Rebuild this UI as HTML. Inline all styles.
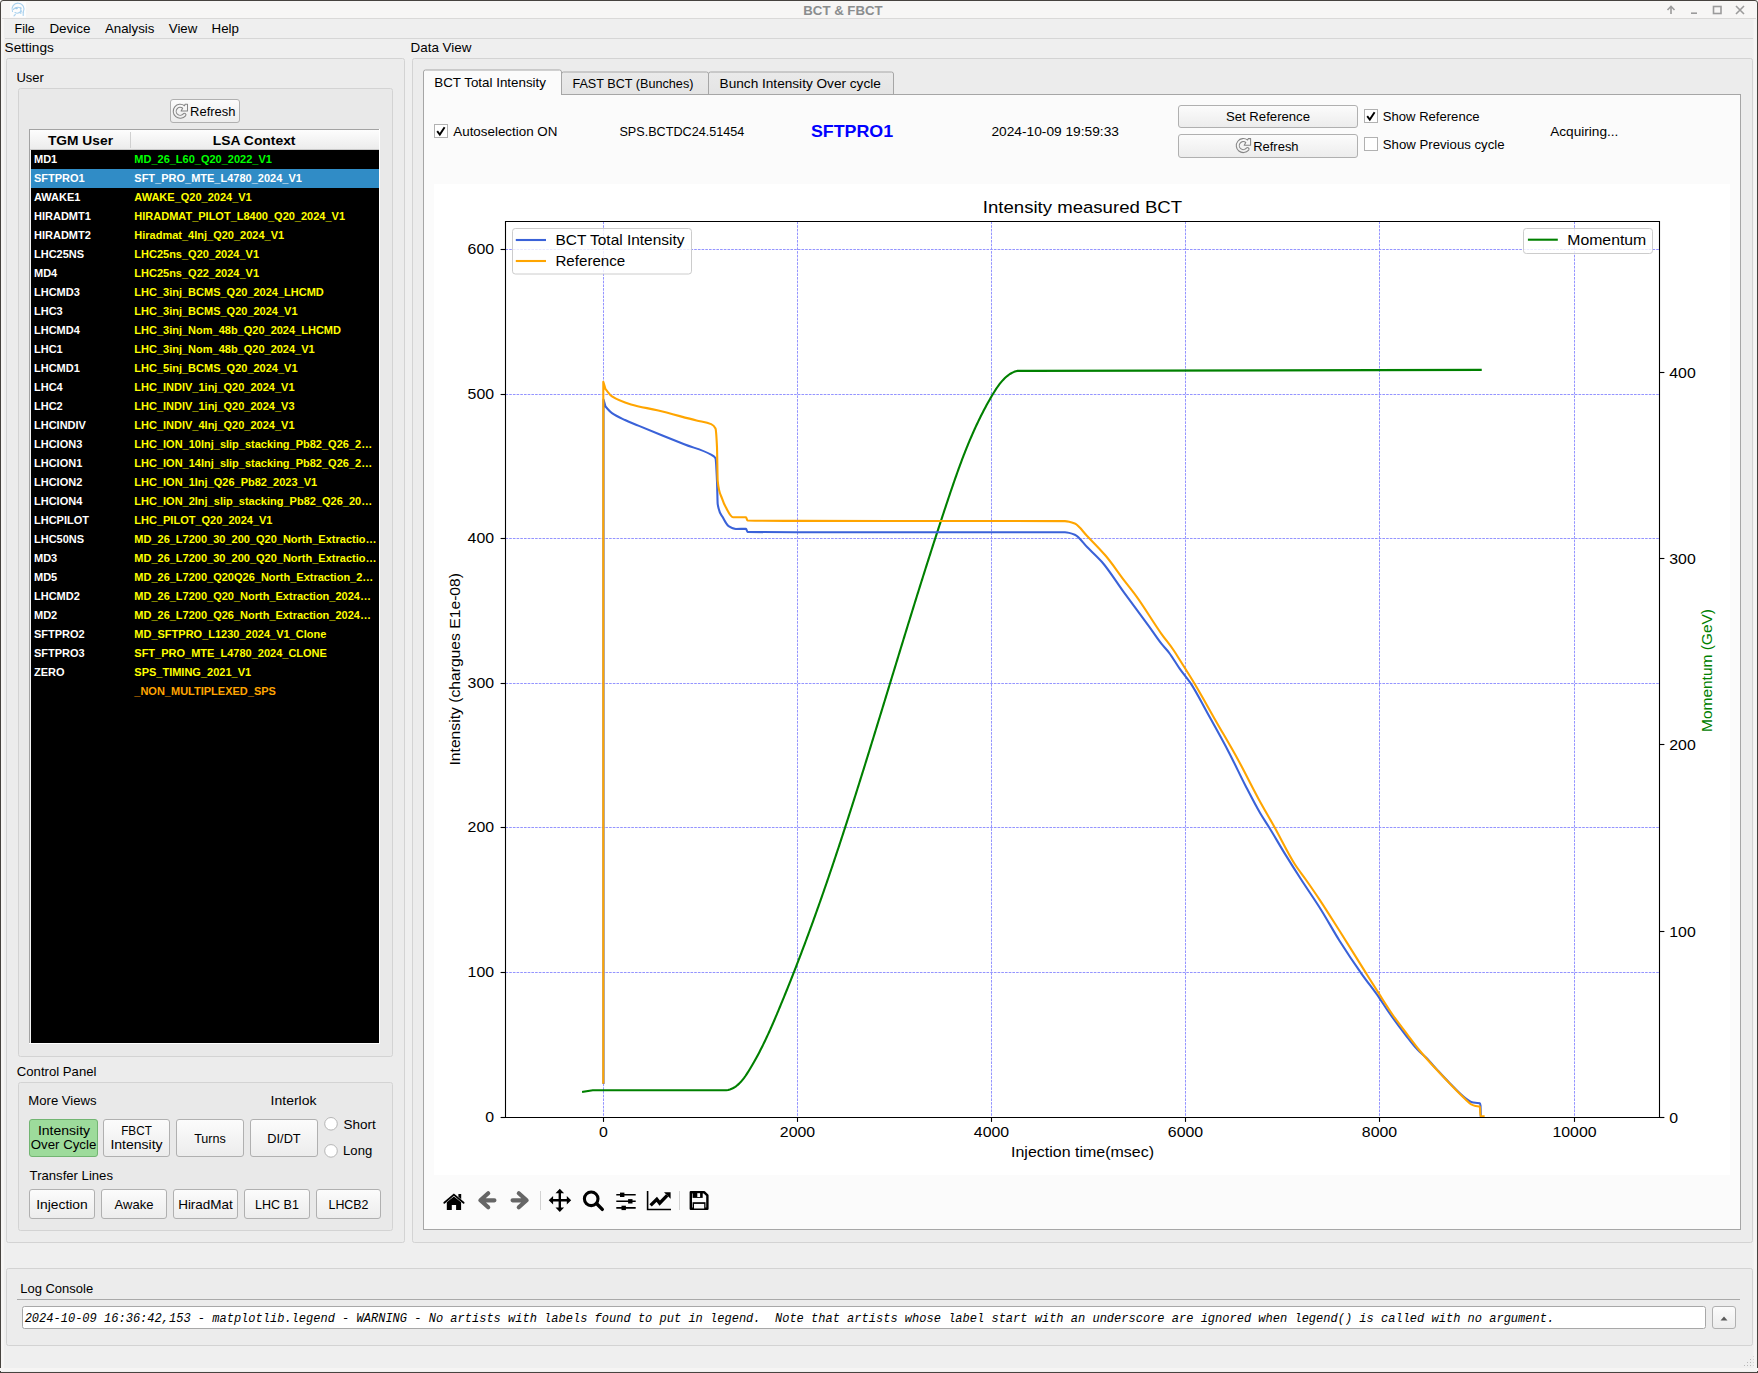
<!DOCTYPE html>
<html><head><meta charset="utf-8"><title>BCT &amp; FBCT</title>
<style>
html,body{margin:0;padding:0;width:1758px;height:1373px;overflow:hidden;background:#efefef;}
svg{display:block;}
text{white-space:pre;}
</style></head><body>
<svg width="1758" height="1373" viewBox="0 0 1758 1373" shape-rendering="auto">
<defs>
<linearGradient id="btn" x1="0" y1="0" x2="0" y2="1"><stop offset="0" stop-color="#fcfcfc"/><stop offset="1" stop-color="#ececec"/></linearGradient>
<linearGradient id="hdr" x1="0" y1="0" x2="0" y2="1"><stop offset="0" stop-color="#fdfdfd"/><stop offset="1" stop-color="#ebebeb"/></linearGradient>
<linearGradient id="tabu" x1="0" y1="0" x2="0" y2="1"><stop offset="0" stop-color="#eaeaea"/><stop offset="1" stop-color="#e4e4e4"/></linearGradient>
</defs>
<rect x="0" y="0" width="1758" height="1373" fill="#efefef"/>
<rect x="0" y="0" width="1758" height="19" fill="#f7f6f5"/>
<line x1="2" y1="18.5" x2="1756" y2="18.5" stroke="#dad9d8" stroke-width="1"/>
<text x="803.30" y="14.80" font-family='"Liberation Sans",sans-serif' font-size="12.36" fill="#8a8d8e" font-weight="bold" textLength="79.30" lengthAdjust="spacingAndGlyphs">BCT &amp; FBCT</text>
<rect x="10" y="2" width="16" height="15.5" fill="#ffffff" opacity="0.75"/>
<g fill="none" stroke="#a9d1ee" stroke-width="1.1" stroke-linecap="round"><path d="M12.5 11.5 A6 6 0 1 1 23.2 12.2"/><path d="M13.2 9.5 Q17 5.5 21 8.5"/><path d="M15 12.5 Q18 14.5 21.5 11"/><path d="M20.8 7.2 V13.5 M23.2 12 V15.5 M15.3 14.5 L14 15.8"/></g>
<ellipse cx="16.5" cy="8.3" rx="1.4" ry="0.9" fill="#9ecae9"/>
<g fill="none" stroke="#9b9b9b" stroke-width="1.6"><path d="M1671 14 V6.5 M1667.5 10 L1671 6.3 L1674.5 10"/><path d="M1691 13.2 H1697"/><rect x="1713.5" y="6.5" width="7.5" height="7"/><path d="M1736 6 L1744 14 M1744 6 L1736 14"/></g>
<text x="14.52" y="33.00" font-family='"Liberation Sans",sans-serif' font-size="12.36" fill="#000" textLength="20.08" lengthAdjust="spacingAndGlyphs">File</text>
<text x="49.42" y="33.00" font-family='"Liberation Sans",sans-serif' font-size="12.36" fill="#000" textLength="41.05" lengthAdjust="spacingAndGlyphs">Device</text>
<text x="105.01" y="33.00" font-family='"Liberation Sans",sans-serif' font-size="12.36" fill="#000" textLength="49.44" lengthAdjust="spacingAndGlyphs">Analysis</text>
<text x="168.81" y="33.00" font-family='"Liberation Sans",sans-serif' font-size="12.36" fill="#000" textLength="28.47" lengthAdjust="spacingAndGlyphs">View</text>
<text x="211.52" y="33.00" font-family='"Liberation Sans",sans-serif' font-size="12.36" fill="#000" textLength="27.38" lengthAdjust="spacingAndGlyphs">Help</text>
<line x1="5" y1="38.5" x2="1753" y2="38.5" stroke="#d6d6d6" stroke-width="1"/>
<text x="4.61" y="51.90" font-family='"Liberation Sans",sans-serif' font-size="12.36" fill="#000" textLength="49.23" lengthAdjust="spacingAndGlyphs">Settings</text>
<text x="410.52" y="52.00" font-family='"Liberation Sans",sans-serif' font-size="12.36" fill="#000" textLength="60.94" lengthAdjust="spacingAndGlyphs">Data View</text>
<rect x="6.5" y="58.5" width="398" height="1184" rx="2" fill="#ececec" stroke="#d3d3d3" stroke-width="1"/>
<rect x="412.5" y="58.5" width="1340" height="1184" rx="2" fill="#ececec" stroke="#d3d3d3" stroke-width="1"/>
<text x="16.46" y="81.70" font-family='"Liberation Sans",sans-serif' font-size="12.36" fill="#000" textLength="27.36" lengthAdjust="spacingAndGlyphs">User</text>
<rect x="18.5" y="88.5" width="374" height="968" rx="2" fill="#e9e9e9" stroke="#d3d3d3" stroke-width="1"/>
<text x="16.83" y="1076.10" font-family='"Liberation Sans",sans-serif' font-size="12.36" fill="#000" textLength="79.58" lengthAdjust="spacingAndGlyphs">Control Panel</text>
<rect x="18.5" y="1082.5" width="374" height="148" rx="2" fill="#e9e9e9" stroke="#d3d3d3" stroke-width="1"/>
<rect x="170.5" y="99.5" width="69" height="23" rx="2.5" fill="url(#btn)" stroke="#b0b0b0" stroke-width="1"/>
<path d="M184.51 105.78 A7.0 7.0 0 1 0 185.56 115.80 A1.5 1.5 0 0 0 183.26 113.87 A4.0 4.0 0 1 1 182.66 108.15 L181.10 111.00 L187.50 111.00 L187.50 104.30 L185.10 104.30 Z" fill="none" stroke="#858585" stroke-width="1.05" stroke-linejoin="round"/>
<text x="190.12" y="115.90" font-family='"Liberation Sans",sans-serif' font-size="12.36" fill="#000" textLength="45.34" lengthAdjust="spacingAndGlyphs">Refresh</text>
<rect x="29" y="129" width="351" height="915" fill="#000000"/>
<line x1="29.5" y1="129" x2="29.5" y2="1044" stroke="#a3a3a3" stroke-width="1"/>
<line x1="29" y1="129.5" x2="380" y2="129.5" stroke="#a3a3a3" stroke-width="1"/>
<line x1="379.5" y1="129" x2="379.5" y2="1044" stroke="#ffffff" stroke-width="1"/>
<line x1="29" y1="1043.5" x2="380" y2="1043.5" stroke="#ffffff" stroke-width="1"/>
<line x1="30.5" y1="130" x2="30.5" y2="1043" stroke="#f4f4f4" stroke-width="1"/>
<rect x="30" y="130" width="349" height="20" fill="url(#hdr)"/>
<line x1="30" y1="149.5" x2="379" y2="149.5" stroke="#c9c9c9" stroke-width="1"/>
<line x1="130.5" y1="132" x2="130.5" y2="148" stroke="#d0d0d0" stroke-width="1"/>
<text x="47.94" y="144.70" font-family='"Liberation Sans",sans-serif' font-size="12.36" fill="#000" font-weight="bold" textLength="65.09" lengthAdjust="spacingAndGlyphs">TGM User</text>
<text x="212.80" y="144.70" font-family='"Liberation Sans",sans-serif' font-size="12.36" fill="#000" font-weight="bold" textLength="82.69" lengthAdjust="spacingAndGlyphs">LSA Context</text>
<rect x="31" y="169" width="348" height="19" fill="#308cc6"/>
<text x="34.0" y="162.7" font-family='"Liberation Sans",sans-serif' font-size="11" font-weight="bold" fill="#ffffff">MD1</text>
<text x="134.3" y="162.7" font-family='"Liberation Sans",sans-serif' font-size="11" font-weight="bold" fill="#00ff00">MD_26_L60_Q20_2022_V1</text>
<text x="34.0" y="181.7" font-family='"Liberation Sans",sans-serif' font-size="11" font-weight="bold" fill="#ffffff">SFTPRO1</text>
<text x="134.3" y="181.7" font-family='"Liberation Sans",sans-serif' font-size="11" font-weight="bold" fill="#ffffff">SFT_PRO_MTE_L4780_2024_V1</text>
<text x="34.0" y="200.7" font-family='"Liberation Sans",sans-serif' font-size="11" font-weight="bold" fill="#ffffff">AWAKE1</text>
<text x="134.3" y="200.7" font-family='"Liberation Sans",sans-serif' font-size="11" font-weight="bold" fill="#ffff00">AWAKE_Q20_2024_V1</text>
<text x="34.0" y="219.7" font-family='"Liberation Sans",sans-serif' font-size="11" font-weight="bold" fill="#ffffff">HIRADMT1</text>
<text x="134.3" y="219.7" font-family='"Liberation Sans",sans-serif' font-size="11" font-weight="bold" fill="#ffff00">HIRADMAT_PILOT_L8400_Q20_2024_V1</text>
<text x="34.0" y="238.7" font-family='"Liberation Sans",sans-serif' font-size="11" font-weight="bold" fill="#ffffff">HIRADMT2</text>
<text x="134.3" y="238.7" font-family='"Liberation Sans",sans-serif' font-size="11" font-weight="bold" fill="#ffff00">Hiradmat_4Inj_Q20_2024_V1</text>
<text x="34.0" y="257.7" font-family='"Liberation Sans",sans-serif' font-size="11" font-weight="bold" fill="#ffffff">LHC25NS</text>
<text x="134.3" y="257.7" font-family='"Liberation Sans",sans-serif' font-size="11" font-weight="bold" fill="#ffff00">LHC25ns_Q20_2024_V1</text>
<text x="34.0" y="276.7" font-family='"Liberation Sans",sans-serif' font-size="11" font-weight="bold" fill="#ffffff">MD4</text>
<text x="134.3" y="276.7" font-family='"Liberation Sans",sans-serif' font-size="11" font-weight="bold" fill="#ffff00">LHC25ns_Q22_2024_V1</text>
<text x="34.0" y="295.7" font-family='"Liberation Sans",sans-serif' font-size="11" font-weight="bold" fill="#ffffff">LHCMD3</text>
<text x="134.3" y="295.7" font-family='"Liberation Sans",sans-serif' font-size="11" font-weight="bold" fill="#ffff00">LHC_3inj_BCMS_Q20_2024_LHCMD</text>
<text x="34.0" y="314.7" font-family='"Liberation Sans",sans-serif' font-size="11" font-weight="bold" fill="#ffffff">LHC3</text>
<text x="134.3" y="314.7" font-family='"Liberation Sans",sans-serif' font-size="11" font-weight="bold" fill="#ffff00">LHC_3inj_BCMS_Q20_2024_V1</text>
<text x="34.0" y="333.7" font-family='"Liberation Sans",sans-serif' font-size="11" font-weight="bold" fill="#ffffff">LHCMD4</text>
<text x="134.3" y="333.7" font-family='"Liberation Sans",sans-serif' font-size="11" font-weight="bold" fill="#ffff00">LHC_3inj_Nom_48b_Q20_2024_LHCMD</text>
<text x="34.0" y="352.7" font-family='"Liberation Sans",sans-serif' font-size="11" font-weight="bold" fill="#ffffff">LHC1</text>
<text x="134.3" y="352.7" font-family='"Liberation Sans",sans-serif' font-size="11" font-weight="bold" fill="#ffff00">LHC_3inj_Nom_48b_Q20_2024_V1</text>
<text x="34.0" y="371.7" font-family='"Liberation Sans",sans-serif' font-size="11" font-weight="bold" fill="#ffffff">LHCMD1</text>
<text x="134.3" y="371.7" font-family='"Liberation Sans",sans-serif' font-size="11" font-weight="bold" fill="#ffff00">LHC_5inj_BCMS_Q20_2024_V1</text>
<text x="34.0" y="390.7" font-family='"Liberation Sans",sans-serif' font-size="11" font-weight="bold" fill="#ffffff">LHC4</text>
<text x="134.3" y="390.7" font-family='"Liberation Sans",sans-serif' font-size="11" font-weight="bold" fill="#ffff00">LHC_INDIV_1inj_Q20_2024_V1</text>
<text x="34.0" y="409.7" font-family='"Liberation Sans",sans-serif' font-size="11" font-weight="bold" fill="#ffffff">LHC2</text>
<text x="134.3" y="409.7" font-family='"Liberation Sans",sans-serif' font-size="11" font-weight="bold" fill="#ffff00">LHC_INDIV_1inj_Q20_2024_V3</text>
<text x="34.0" y="428.7" font-family='"Liberation Sans",sans-serif' font-size="11" font-weight="bold" fill="#ffffff">LHCINDIV</text>
<text x="134.3" y="428.7" font-family='"Liberation Sans",sans-serif' font-size="11" font-weight="bold" fill="#ffff00">LHC_INDIV_4Inj_Q20_2024_V1</text>
<text x="34.0" y="447.7" font-family='"Liberation Sans",sans-serif' font-size="11" font-weight="bold" fill="#ffffff">LHCION3</text>
<text x="134.3" y="447.7" font-family='"Liberation Sans",sans-serif' font-size="11" font-weight="bold" fill="#ffff00">LHC_ION_10Inj_slip_stacking_Pb82_Q26_2…</text>
<text x="34.0" y="466.7" font-family='"Liberation Sans",sans-serif' font-size="11" font-weight="bold" fill="#ffffff">LHCION1</text>
<text x="134.3" y="466.7" font-family='"Liberation Sans",sans-serif' font-size="11" font-weight="bold" fill="#ffff00">LHC_ION_14Inj_slip_stacking_Pb82_Q26_2…</text>
<text x="34.0" y="485.7" font-family='"Liberation Sans",sans-serif' font-size="11" font-weight="bold" fill="#ffffff">LHCION2</text>
<text x="134.3" y="485.7" font-family='"Liberation Sans",sans-serif' font-size="11" font-weight="bold" fill="#ffff00">LHC_ION_1Inj_Q26_Pb82_2023_V1</text>
<text x="34.0" y="504.7" font-family='"Liberation Sans",sans-serif' font-size="11" font-weight="bold" fill="#ffffff">LHCION4</text>
<text x="134.3" y="504.7" font-family='"Liberation Sans",sans-serif' font-size="11" font-weight="bold" fill="#ffff00">LHC_ION_2Inj_slip_stacking_Pb82_Q26_20…</text>
<text x="34.0" y="523.7" font-family='"Liberation Sans",sans-serif' font-size="11" font-weight="bold" fill="#ffffff">LHCPILOT</text>
<text x="134.3" y="523.7" font-family='"Liberation Sans",sans-serif' font-size="11" font-weight="bold" fill="#ffff00">LHC_PILOT_Q20_2024_V1</text>
<text x="34.0" y="542.7" font-family='"Liberation Sans",sans-serif' font-size="11" font-weight="bold" fill="#ffffff">LHC50NS</text>
<text x="134.3" y="542.7" font-family='"Liberation Sans",sans-serif' font-size="11" font-weight="bold" fill="#ffff00">MD_26_L7200_30_200_Q20_North_Extractio…</text>
<text x="34.0" y="561.7" font-family='"Liberation Sans",sans-serif' font-size="11" font-weight="bold" fill="#ffffff">MD3</text>
<text x="134.3" y="561.7" font-family='"Liberation Sans",sans-serif' font-size="11" font-weight="bold" fill="#ffff00">MD_26_L7200_30_200_Q20_North_Extractio…</text>
<text x="34.0" y="580.7" font-family='"Liberation Sans",sans-serif' font-size="11" font-weight="bold" fill="#ffffff">MD5</text>
<text x="134.3" y="580.7" font-family='"Liberation Sans",sans-serif' font-size="11" font-weight="bold" fill="#ffff00">MD_26_L7200_Q20Q26_North_Extraction_2…</text>
<text x="34.0" y="599.7" font-family='"Liberation Sans",sans-serif' font-size="11" font-weight="bold" fill="#ffffff">LHCMD2</text>
<text x="134.3" y="599.7" font-family='"Liberation Sans",sans-serif' font-size="11" font-weight="bold" fill="#ffff00">MD_26_L7200_Q20_North_Extraction_2024…</text>
<text x="34.0" y="618.7" font-family='"Liberation Sans",sans-serif' font-size="11" font-weight="bold" fill="#ffffff">MD2</text>
<text x="134.3" y="618.7" font-family='"Liberation Sans",sans-serif' font-size="11" font-weight="bold" fill="#ffff00">MD_26_L7200_Q26_North_Extraction_2024…</text>
<text x="34.0" y="637.7" font-family='"Liberation Sans",sans-serif' font-size="11" font-weight="bold" fill="#ffffff">SFTPRO2</text>
<text x="134.3" y="637.7" font-family='"Liberation Sans",sans-serif' font-size="11" font-weight="bold" fill="#ffff00">MD_SFTPRO_L1230_2024_V1_Clone</text>
<text x="34.0" y="656.7" font-family='"Liberation Sans",sans-serif' font-size="11" font-weight="bold" fill="#ffffff">SFTPRO3</text>
<text x="134.3" y="656.7" font-family='"Liberation Sans",sans-serif' font-size="11" font-weight="bold" fill="#ffff00">SFT_PRO_MTE_L4780_2024_CLONE</text>
<text x="34.0" y="675.7" font-family='"Liberation Sans",sans-serif' font-size="11" font-weight="bold" fill="#ffffff">ZERO</text>
<text x="134.3" y="675.7" font-family='"Liberation Sans",sans-serif' font-size="11" font-weight="bold" fill="#ffff00">SPS_TIMING_2021_V1</text>
<text x="134.3" y="694.7" font-family='"Liberation Sans",sans-serif' font-size="11" font-weight="bold" fill="#ffa500">_NON_MULTIPLEXED_SPS</text>
<text x="28.32" y="1104.80" font-family='"Liberation Sans",sans-serif' font-size="12.36" fill="#000" textLength="68.30" lengthAdjust="spacingAndGlyphs">More Views</text>
<text x="270.62" y="1104.80" font-family='"Liberation Sans",sans-serif' font-size="12.36" fill="#000" textLength="45.81" lengthAdjust="spacingAndGlyphs">Interlok</text>
<rect x="29.5" y="1119.5" width="68" height="37" rx="2.5" fill="#9ddb9b" stroke="#72b572" stroke-width="1"/>
<text x="64.00" y="1134.60" font-family='"Liberation Sans",sans-serif' font-size="12.36" fill="#000" text-anchor="middle" textLength="52.25" lengthAdjust="spacingAndGlyphs">Intensity</text>
<text x="63.50" y="1148.70" font-family='"Liberation Sans",sans-serif' font-size="12.36" fill="#000" text-anchor="middle" textLength="65.50" lengthAdjust="spacingAndGlyphs">Over Cycle</text>
<rect x="103.5" y="1119.5" width="66" height="37" rx="2.5" fill="url(#btn)" stroke="#b0b0b0" stroke-width="1"/>
<text x="136.50" y="1134.60" font-family='"Liberation Sans",sans-serif' font-size="12.36" fill="#000" text-anchor="middle" textLength="30.64" lengthAdjust="spacingAndGlyphs">FBCT</text>
<text x="136.50" y="1148.70" font-family='"Liberation Sans",sans-serif' font-size="12.36" fill="#000" text-anchor="middle" textLength="52.25" lengthAdjust="spacingAndGlyphs">Intensity</text>
<rect x="176.5" y="1119.5" width="67" height="37" rx="2.5" fill="url(#btn)" stroke="#b0b0b0" stroke-width="1"/>
<text x="210.00" y="1142.60" font-family='"Liberation Sans",sans-serif' font-size="12.36" fill="#000" text-anchor="middle" textLength="31.70" lengthAdjust="spacingAndGlyphs">Turns</text>
<rect x="250.5" y="1119.5" width="67" height="37" rx="2.5" fill="url(#btn)" stroke="#b0b0b0" stroke-width="1"/>
<text x="284.00" y="1142.60" font-family='"Liberation Sans",sans-serif' font-size="12.36" fill="#000" text-anchor="middle" textLength="33.39" lengthAdjust="spacingAndGlyphs">DI/DT</text>
<circle cx="331" cy="1123.8" r="6.3" fill="#ffffff" stroke="#b5b5b5" stroke-width="1"/>
<text x="343.51" y="1128.50" font-family='"Liberation Sans",sans-serif' font-size="12.36" fill="#000" textLength="32.22" lengthAdjust="spacingAndGlyphs">Short</text>
<circle cx="331" cy="1150.9" r="6.3" fill="#ffffff" stroke="#b5b5b5" stroke-width="1"/>
<text x="343.12" y="1155.40" font-family='"Liberation Sans",sans-serif' font-size="12.36" fill="#000" textLength="29.06" lengthAdjust="spacingAndGlyphs">Long</text>
<text x="29.64" y="1180.30" font-family='"Liberation Sans",sans-serif' font-size="12.36" fill="#000" textLength="83.34" lengthAdjust="spacingAndGlyphs">Transfer Lines</text>
<rect x="29.5" y="1189.5" width="65" height="29" rx="2.5" fill="url(#btn)" stroke="#b0b0b0" stroke-width="1"/>
<text x="62.00" y="1208.60" font-family='"Liberation Sans",sans-serif' font-size="12.36" fill="#000" text-anchor="middle" textLength="51.45" lengthAdjust="spacingAndGlyphs">Injection</text>
<rect x="101.5" y="1189.5" width="65" height="29" rx="2.5" fill="url(#btn)" stroke="#b0b0b0" stroke-width="1"/>
<text x="134.00" y="1208.60" font-family='"Liberation Sans",sans-serif' font-size="12.36" fill="#000" text-anchor="middle" textLength="38.81" lengthAdjust="spacingAndGlyphs">Awake</text>
<rect x="173.5" y="1189.5" width="64" height="29" rx="2.5" fill="url(#btn)" stroke="#b0b0b0" stroke-width="1"/>
<text x="205.50" y="1208.60" font-family='"Liberation Sans",sans-serif' font-size="12.36" fill="#000" text-anchor="middle" textLength="54.70" lengthAdjust="spacingAndGlyphs">HiradMat</text>
<rect x="244.5" y="1189.5" width="65" height="29" rx="2.5" fill="url(#btn)" stroke="#b0b0b0" stroke-width="1"/>
<text x="277.00" y="1208.60" font-family='"Liberation Sans",sans-serif' font-size="12.36" fill="#000" text-anchor="middle" textLength="43.78" lengthAdjust="spacingAndGlyphs">LHC B1</text>
<rect x="316.5" y="1189.5" width="64" height="29" rx="2.5" fill="url(#btn)" stroke="#b0b0b0" stroke-width="1"/>
<text x="348.50" y="1208.60" font-family='"Liberation Sans",sans-serif' font-size="12.36" fill="#000" text-anchor="middle" textLength="39.97" lengthAdjust="spacingAndGlyphs">LHCB2</text>
<path d="M561.5 94 V74 Q561.5 72 563.5 72 H706.5 Q708.5 72 708.5 74 V94" fill="url(#tabu)" stroke="#a6a6a6" stroke-width="1"/>
<path d="M708.5 94 V74 Q708.5 72 710.5 72 H891.5 Q893.5 72 893.5 74 V94" fill="url(#tabu)" stroke="#a6a6a6" stroke-width="1"/>
<rect x="423.5" y="94.5" width="1317" height="1135" fill="#fbfbfb" stroke="#a6a6a6" stroke-width="1"/>
<path d="M423.5 95 V72 Q423.5 70 425.5 70 H559.5 Q561.5 70 561.5 72 V95" fill="#fbfbfb" stroke="#a6a6a6" stroke-width="1"/>
<rect x="424" y="94" width="137" height="2" fill="#fbfbfb"/>
<text x="434.32" y="86.80" font-family='"Liberation Sans",sans-serif' font-size="12.36" fill="#000" textLength="111.64" lengthAdjust="spacingAndGlyphs">BCT Total Intensity</text>
<text x="572.42" y="88.10" font-family='"Liberation Sans",sans-serif' font-size="12.36" fill="#000" textLength="121.00" lengthAdjust="spacingAndGlyphs">FAST BCT (Bunches)</text>
<text x="719.62" y="88.10" font-family='"Liberation Sans",sans-serif' font-size="12.36" fill="#000" textLength="161.25" lengthAdjust="spacingAndGlyphs">Bunch Intensity Over cycle</text>
<rect x="434.5" y="124.5" width="13" height="13" fill="#ffffff" stroke="#b1b1b1" stroke-width="1"/><path d="M437.2 131.2 L439.8 134.6 L444.6 127.2" fill="none" stroke="#000" stroke-width="1.9" stroke-linejoin="miter"/>
<text x="453.31" y="135.60" font-family='"Liberation Sans",sans-serif' font-size="12.36" fill="#000" textLength="104.05" lengthAdjust="spacingAndGlyphs">Autoselection ON</text>
<text x="619.41" y="136.10" font-family='"Liberation Sans",sans-serif' font-size="12.36" fill="#000" textLength="124.94" lengthAdjust="spacingAndGlyphs">SPS.BCTDC24.51454</text>
<text x="810.95" y="136.70" font-family='"Liberation Sans",sans-serif' font-size="16.48" fill="#0000ff" font-weight="bold" textLength="82.20" lengthAdjust="spacingAndGlyphs">SFTPRO1</text>
<text x="991.42" y="135.80" font-family='"Liberation Sans",sans-serif' font-size="12.36" fill="#000" textLength="127.53" lengthAdjust="spacingAndGlyphs">2024-10-09 19:59:33</text>
<rect x="1178.5" y="105.5" width="179" height="22" rx="2.5" fill="url(#btn)" stroke="#b0b0b0" stroke-width="1"/>
<text x="1268.00" y="121.30" font-family='"Liberation Sans",sans-serif' font-size="12.36" fill="#000" text-anchor="middle" textLength="84.00" lengthAdjust="spacingAndGlyphs">Set Reference</text>
<rect x="1178.5" y="134.5" width="179" height="23" rx="2.5" fill="url(#btn)" stroke="#b0b0b0" stroke-width="1"/>
<path d="M1247.61 140.08 A7.0 7.0 0 1 0 1248.66 150.10 A1.5 1.5 0 0 0 1246.36 148.17 A4.0 4.0 0 1 1 1245.76 142.45 L1244.20 145.30 L1250.60 145.30 L1250.60 138.60 L1248.20 138.60 Z" fill="none" stroke="#858585" stroke-width="1.05" stroke-linejoin="round"/>
<text x="1253.22" y="150.80" font-family='"Liberation Sans",sans-serif' font-size="12.36" fill="#000" textLength="45.34" lengthAdjust="spacingAndGlyphs">Refresh</text>
<rect x="1364.5" y="109.5" width="13" height="13" fill="#ffffff" stroke="#b1b1b1" stroke-width="1"/><path d="M1367.2 116.2 L1369.8 119.6 L1374.6 112.2" fill="none" stroke="#000" stroke-width="1.9" stroke-linejoin="miter"/>
<text x="1382.81" y="120.70" font-family='"Liberation Sans",sans-serif' font-size="12.36" fill="#000" textLength="96.67" lengthAdjust="spacingAndGlyphs">Show Reference</text>
<rect x="1364.5" y="137.5" width="13" height="13" fill="#ffffff" stroke="#b1b1b1" stroke-width="1"/>
<text x="1382.81" y="148.60" font-family='"Liberation Sans",sans-serif' font-size="12.36" fill="#000" textLength="121.77" lengthAdjust="spacingAndGlyphs">Show Previous cycle</text>
<text x="1550.21" y="135.80" font-family='"Liberation Sans",sans-serif' font-size="12.36" fill="#000" textLength="68.09" lengthAdjust="spacingAndGlyphs">Acquiring...</text>
<rect x="434" y="184" width="1296" height="991" fill="#ffffff"/>
<g><line x1="603.50" y1="221.5" x2="603.50" y2="1117.0" stroke="#9494ff" stroke-width="1" stroke-dasharray="2.6 1.1"/><line x1="797.50" y1="221.5" x2="797.50" y2="1117.0" stroke="#9494ff" stroke-width="1" stroke-dasharray="2.6 1.1"/><line x1="991.50" y1="221.5" x2="991.50" y2="1117.0" stroke="#9494ff" stroke-width="1" stroke-dasharray="2.6 1.1"/><line x1="1185.50" y1="221.5" x2="1185.50" y2="1117.0" stroke="#9494ff" stroke-width="1" stroke-dasharray="2.6 1.1"/><line x1="1379.50" y1="221.5" x2="1379.50" y2="1117.0" stroke="#9494ff" stroke-width="1" stroke-dasharray="2.6 1.1"/><line x1="1574.50" y1="221.5" x2="1574.50" y2="1117.0" stroke="#9494ff" stroke-width="1" stroke-dasharray="2.6 1.1"/><line x1="505.5" y1="972.50" x2="1659.5" y2="972.50" stroke="#9494ff" stroke-width="1" stroke-dasharray="2.6 1.1"/><line x1="505.5" y1="827.50" x2="1659.5" y2="827.50" stroke="#9494ff" stroke-width="1" stroke-dasharray="2.6 1.1"/><line x1="505.5" y1="683.50" x2="1659.5" y2="683.50" stroke="#9494ff" stroke-width="1" stroke-dasharray="2.6 1.1"/><line x1="505.5" y1="538.50" x2="1659.5" y2="538.50" stroke="#9494ff" stroke-width="1" stroke-dasharray="2.6 1.1"/><line x1="505.5" y1="394.50" x2="1659.5" y2="394.50" stroke="#9494ff" stroke-width="1" stroke-dasharray="2.6 1.1"/><line x1="505.5" y1="249.50" x2="1659.5" y2="249.50" stroke="#9494ff" stroke-width="1" stroke-dasharray="2.6 1.1"/></g>
<clipPath id="axclip"><rect x="505.5" y="221.5" width="1154.0" height="895.5"/></clipPath>
<g clip-path="url(#axclip)" fill="none" stroke-width="2.1" stroke-linejoin="round" stroke-linecap="square">
<path d="M583.10 1091.80 L592.80 1090.30 L605.00 1090.20 L720.04 1090.20 L720.04 1090.20 L722.21 1090.20 L724.28 1090.20 L726.25 1090.20 L728.13 1089.97 L729.92 1089.45 L731.64 1088.79 L733.27 1087.99 L734.83 1087.06 L736.32 1086.02 L737.75 1084.88 L739.12 1083.63 L740.44 1082.29 L741.71 1080.88 L742.93 1079.39 L744.12 1077.85 L745.27 1076.25 L746.39 1074.61 L747.48 1072.94 L748.55 1071.24 L749.61 1069.53 L750.66 1067.81 L751.69 1066.08 L752.71 1064.34 L753.72 1062.59 L754.71 1060.83 L755.69 1059.06 L756.67 1057.29 L757.63 1055.50 L758.58 1053.71 L759.51 1051.91 L760.44 1050.10 L761.36 1048.29 L762.27 1046.47 L763.17 1044.64 L764.06 1042.81 L764.95 1040.97 L765.82 1039.13 L766.69 1037.28 L767.55 1035.43 L768.40 1033.57 L769.25 1031.70 L770.09 1029.84 L770.92 1027.97 L771.75 1026.09 L772.57 1024.22 L773.39 1022.34 L774.20 1020.46 L775.00 1018.58 L775.81 1016.69 L776.61 1014.80 L777.40 1012.92 L778.19 1011.03 L778.98 1009.14 L779.77 1007.25 L780.55 1005.36 L781.34 1003.47 L782.11 1001.58 L782.89 999.69 L783.66 997.80 L784.44 995.91 L785.21 994.02 L785.97 992.13 L786.74 990.24 L787.50 988.35 L788.26 986.46 L789.02 984.57 L789.77 982.67 L790.52 980.78 L791.27 978.89 L792.02 977.00 L792.77 975.10 L793.51 973.21 L794.25 971.32 L794.99 969.43 L795.73 967.53 L796.46 965.64 L797.20 963.74 L797.93 961.85 L798.65 959.96 L799.38 958.06 L800.10 956.17 L800.83 954.27 L801.55 952.38 L802.26 950.48 L802.98 948.58 L803.69 946.69 L804.41 944.79 L805.12 942.90 L805.82 941.00 L806.53 939.10 L807.23 937.20 L807.94 935.31 L808.64 933.41 L809.33 931.51 L810.03 929.61 L810.73 927.71 L811.42 925.82 L812.11 923.92 L812.80 922.02 L813.49 920.12 L814.17 918.22 L814.86 916.32 L815.54 914.42 L816.22 912.52 L816.90 910.62 L817.57 908.71 L818.25 906.81 L818.92 904.91 L819.60 903.01 L820.27 901.11 L820.94 899.20 L821.60 897.30 L822.27 895.40 L822.93 893.49 L823.60 891.59 L824.26 889.69 L824.92 887.78 L825.58 885.88 L826.23 883.97 L826.89 882.07 L827.54 880.16 L828.20 878.25 L828.85 876.35 L829.50 874.44 L830.15 872.53 L830.79 870.63 L831.44 868.72 L832.09 866.81 L832.73 864.90 L833.37 863.00 L834.01 861.09 L834.65 859.18 L835.29 857.27 L835.93 855.36 L836.56 853.45 L837.20 851.54 L837.83 849.63 L838.47 847.72 L839.10 845.81 L839.73 843.89 L840.36 841.98 L840.99 840.07 L841.61 838.16 L842.24 836.24 L842.87 834.33 L843.49 832.42 L844.11 830.50 L844.74 828.59 L845.36 826.67 L845.98 824.76 L846.60 822.84 L847.22 820.93 L847.84 819.01 L848.45 817.09 L849.07 815.18 L849.68 813.26 L850.30 811.34 L850.91 809.42 L851.53 807.50 L852.14 805.59 L852.75 803.67 L853.36 801.75 L853.97 799.83 L854.58 797.91 L855.19 795.99 L855.80 794.07 L856.41 792.14 L857.01 790.22 L857.62 788.30 L858.23 786.38 L858.83 784.45 L859.44 782.53 L860.04 780.61 L860.64 778.68 L861.25 776.76 L861.85 774.83 L862.45 772.91 L863.05 770.98 L863.66 769.06 L864.26 767.13 L864.86 765.20 L865.46 763.28 L866.06 761.35 L866.66 759.42 L867.25 757.49 L867.85 755.57 L868.45 753.64 L869.05 751.71 L869.65 749.78 L870.24 747.85 L870.84 745.92 L871.44 743.99 L872.03 742.06 L872.63 740.13 L873.22 738.20 L873.82 736.27 L874.41 734.33 L875.01 732.40 L875.60 730.47 L876.20 728.54 L876.79 726.61 L877.38 724.67 L877.98 722.74 L878.57 720.81 L879.16 718.87 L879.76 716.94 L880.35 715.01 L880.94 713.07 L881.54 711.14 L882.13 709.21 L882.72 707.27 L883.31 705.34 L883.90 703.40 L884.50 701.47 L885.09 699.53 L885.68 697.60 L886.27 695.66 L886.86 693.73 L887.46 691.79 L888.05 689.86 L888.64 687.92 L889.23 685.99 L889.82 684.05 L890.41 682.12 L891.01 680.18 L891.60 678.25 L892.19 676.31 L892.78 674.37 L893.37 672.44 L893.96 670.50 L894.56 668.57 L895.15 666.63 L895.74 664.70 L896.33 662.76 L896.93 660.82 L897.52 658.89 L898.11 656.95 L898.70 655.02 L899.30 653.08 L899.89 651.15 L900.48 649.21 L901.08 647.27 L901.67 645.34 L902.27 643.40 L902.86 641.47 L903.45 639.53 L904.05 637.60 L904.64 635.66 L905.24 633.73 L905.84 631.79 L906.43 629.86 L907.03 627.92 L907.62 625.99 L908.22 624.05 L908.82 622.12 L909.42 620.19 L910.01 618.25 L910.61 616.32 L911.21 614.38 L911.81 612.45 L912.41 610.52 L913.01 608.58 L913.61 606.65 L914.21 604.72 L914.81 602.79 L915.41 600.85 L916.02 598.92 L916.62 596.99 L917.22 595.06 L917.83 593.13 L918.43 591.20 L919.03 589.27 L919.64 587.33 L920.24 585.40 L920.85 583.47 L921.46 581.54 L922.07 579.61 L922.67 577.69 L923.28 575.76 L923.89 573.83 L924.50 571.90 L925.11 569.97 L925.72 568.04 L926.33 566.12 L926.95 564.19 L927.56 562.26 L928.17 560.34 L928.79 558.41 L929.40 556.49 L930.02 554.56 L930.63 552.64 L931.25 550.71 L931.87 548.79 L932.49 546.86 L933.11 544.94 L933.73 543.02 L934.35 541.09 L934.97 539.17 L935.59 537.25 L936.21 535.33 L936.84 533.41 L937.46 531.49 L938.09 529.57 L938.72 527.65 L939.34 525.73 L939.97 523.81 L940.60 521.89 L941.23 519.98 L941.86 518.06 L942.49 516.14 L943.13 514.23 L943.76 512.31 L944.39 510.40 L945.03 508.48 L945.67 506.57 L946.30 504.66 L946.94 502.74 L947.58 500.83 L948.22 498.92 L948.87 497.01 L949.51 495.10 L950.15 493.19 L950.80 491.28 L951.45 489.37 L952.10 487.47 L952.75 485.56 L953.41 483.65 L954.07 481.75 L954.73 479.85 L955.40 477.94 L956.07 476.04 L956.74 474.14 L957.42 472.24 L958.10 470.35 L958.79 468.45 L959.48 466.55 L960.17 464.66 L960.88 462.77 L961.58 460.88 L962.30 458.99 L963.02 457.10 L963.74 455.22 L964.48 453.33 L965.22 451.45 L965.96 449.57 L966.72 447.69 L967.48 445.82 L968.25 443.94 L969.02 442.07 L969.81 440.20 L970.60 438.33 L971.41 436.46 L972.22 434.60 L973.04 432.74 L973.87 430.88 L974.71 429.02 L975.56 427.17 L976.42 425.31 L977.29 423.46 L978.17 421.62 L979.06 419.77 L979.96 417.93 L980.88 416.09 L981.80 414.25 L982.74 412.42 L983.69 410.59 L984.65 408.76 L985.62 406.94 L986.61 405.11 L987.61 403.29 L988.62 401.48 L989.65 399.67 L990.69 397.86 L991.74 396.05 L992.81 394.25 L993.90 392.46 L995.00 390.69 L996.13 388.94 L997.29 387.23 L998.47 385.56 L999.68 383.94 L1000.93 382.37 L1002.22 380.86 L1003.54 379.42 L1004.91 378.05 L1006.32 376.77 L1007.78 375.58 L1009.29 374.48 L1010.85 373.49 L1012.47 372.61 L1014.14 371.84 L1015.88 371.20 L1017.68 370.90 L1019.55 370.90 L1021.49 370.90 L1023.50 370.90 L1025.59 370.90 L1027.75 370.90 L1030.00 370.90 L1480.70 369.90" stroke="#008000"/>
<path d="M603.50 1083.00 L603.50 399.50 L605.50 406.60 L605.50 406.60 C607.67 408.80 609.83 411.65 612.00 413.20 C616.33 416.30 620.67 417.98 625.00 420.00 C629.43 422.07 633.87 423.75 638.30 425.60 C646.53 429.04 654.77 432.47 663.00 435.80 C670.30 438.76 677.60 441.63 684.90 444.50 C693.63 447.94 702.37 449.67 711.10 454.70 C712.57 455.55 714.03 455.63 715.50 458.30 C716.00 459.21 716.50 470.12 717.00 481.00 C717.23 486.08 717.47 502.78 717.70 504.20 C719.40 514.54 721.10 514.04 722.80 517.30 C724.73 521.01 726.67 524.85 728.60 526.10 C731.03 527.67 733.47 529.00 735.90 529.00 C739.27 529.00 742.63 528.70 746.00 528.70 C746.50 528.70 747.00 531.89 747.50 531.90 C765.00 532.19 782.50 532.18 800.00 532.20 C888.30 532.28 976.60 532.20 1064.90 532.30 C1068.20 532.30 1071.50 533.50 1074.80 534.80 C1078.90 536.42 1083.00 543.00 1087.10 547.10 C1092.07 552.07 1097.03 556.29 1102.00 562.00 C1109.43 570.54 1116.87 582.71 1124.30 592.90 C1132.53 604.19 1140.77 615.06 1149.00 626.40 C1153.13 632.09 1157.27 638.50 1161.40 643.70 C1163.87 646.80 1166.33 649.10 1168.80 652.30 C1172.53 657.15 1176.27 663.82 1180.00 669.10 C1183.63 674.24 1187.27 678.21 1190.90 683.70 C1196.37 691.97 1201.83 702.95 1207.30 712.80 C1214.60 725.95 1221.90 738.87 1229.20 752.90 C1234.63 763.34 1240.07 775.17 1245.50 785.70 C1250.37 795.13 1255.23 804.68 1260.10 813.00 C1263.13 818.19 1266.17 822.56 1269.20 827.50 C1274.67 836.40 1280.13 846.01 1285.60 854.90 C1290.57 862.97 1295.53 870.78 1300.50 878.50 C1307.33 889.12 1314.17 898.79 1321.00 909.70 C1327.17 919.54 1333.33 930.93 1339.50 940.70 C1346.93 952.48 1354.37 963.53 1361.80 974.10 C1367.57 982.30 1373.33 989.33 1379.10 997.60 C1382.40 1002.33 1385.70 1007.78 1389.00 1012.50 C1394.80 1020.80 1400.60 1028.57 1406.40 1036.00 C1410.10 1040.74 1413.80 1045.68 1417.50 1049.60 C1420.33 1052.60 1423.17 1054.74 1426.00 1057.60 C1429.73 1061.37 1433.47 1065.88 1437.20 1069.90 C1441.30 1074.32 1445.40 1078.77 1449.50 1082.90 C1454.87 1088.30 1460.23 1094.30 1465.60 1098.30 C1467.47 1099.69 1469.33 1101.32 1471.20 1101.90 C1472.63 1102.34 1474.07 1102.62 1475.50 1102.80 C1476.97 1102.99 1478.43 1102.86 1479.90 1103.20 C1480.10 1103.25 1480.30 1104.01 1480.50 1105.60 C1480.60 1106.40 1480.70 1113.20 1480.80 1117.00" stroke="#3a62d8"/>
<path d="M603.30 1082.70 L603.30 381.90 L605.50 389.10 L605.50 389.10 C607.67 391.53 609.83 394.97 612.00 396.40 C618.33 400.59 624.67 402.51 631.00 404.40 C639.73 407.00 648.47 408.20 657.20 410.30 C670.30 413.44 683.40 417.20 696.50 420.50 C701.37 421.73 706.23 421.94 711.10 424.10 C712.57 424.75 714.03 425.34 715.50 428.50 C716.00 429.58 716.50 436.66 717.00 447.40 C717.23 452.41 717.47 478.82 717.70 481.00 C719.13 494.42 720.57 494.16 722.00 498.40 C723.23 502.04 724.47 504.88 725.70 507.10 C728.13 511.49 730.57 517.30 733.00 517.30 C737.33 517.30 741.67 517.30 746.00 517.30 C746.50 517.30 747.00 520.49 747.50 520.50 C765.00 520.89 782.50 520.87 800.00 520.90 C888.30 521.05 976.60 520.91 1064.90 521.10 C1068.20 521.11 1071.50 522.30 1074.80 523.60 C1078.90 525.22 1083.00 531.76 1087.10 536.00 C1093.30 542.41 1099.50 548.46 1105.70 555.80 C1111.90 563.14 1118.10 572.44 1124.30 580.60 C1128.40 585.99 1132.50 590.93 1136.60 596.60 C1144.87 608.03 1153.13 622.14 1161.40 633.80 C1165.53 639.63 1169.67 644.43 1173.80 650.50 C1175.87 653.53 1177.93 657.01 1180.00 660.30 C1184.87 668.04 1189.73 675.58 1194.60 683.70 C1201.87 695.83 1209.13 709.18 1216.40 721.90 C1223.70 734.68 1231.00 746.86 1238.30 760.20 C1244.97 772.38 1251.63 786.15 1258.30 798.40 C1263.77 808.44 1269.23 817.67 1274.70 827.50 C1281.37 839.49 1288.03 853.55 1294.70 864.00 C1298.50 869.96 1302.30 874.57 1306.10 880.00 C1310.63 886.48 1315.17 892.98 1319.70 899.80 C1326.30 909.74 1332.90 920.37 1339.50 930.80 C1347.77 943.87 1356.03 957.24 1364.30 970.40 C1369.23 978.25 1374.17 986.19 1379.10 993.90 C1383.67 1001.04 1388.23 1008.46 1392.80 1015.00 C1397.73 1022.07 1402.67 1028.27 1407.60 1034.80 C1411.33 1039.74 1415.07 1044.88 1418.80 1049.50 C1421.20 1052.47 1423.60 1055.26 1426.00 1058.00 C1429.73 1062.26 1433.47 1066.28 1437.20 1070.30 C1441.30 1074.72 1445.40 1079.08 1449.50 1083.30 C1454.87 1088.82 1460.23 1094.38 1465.60 1099.40 C1467.47 1101.15 1469.33 1103.44 1471.20 1104.40 C1472.63 1105.14 1474.07 1105.71 1475.50 1106.00 C1476.97 1106.29 1478.43 1106.07 1479.90 1106.60 C1480.10 1106.67 1480.30 1116.20 1480.50 1116.20 C1481.53 1116.20 1482.57 1116.20 1483.60 1116.20" stroke="#ffa500"/>
</g>
<path d="M505.5 221.5 H1659.5 V1117.5 H505.5 Z" fill="none" stroke="#000" stroke-width="1.1" stroke-linejoin="miter"/>
<text x="603.50" y="1137.30" font-family='"Liberation Sans",sans-serif' font-size="14.31" fill="#000" text-anchor="middle" textLength="8.83" lengthAdjust="spacingAndGlyphs">0</text>
<text x="797.50" y="1137.30" font-family='"Liberation Sans",sans-serif' font-size="14.31" fill="#000" text-anchor="middle" textLength="35.31" lengthAdjust="spacingAndGlyphs">2000</text>
<text x="991.50" y="1137.30" font-family='"Liberation Sans",sans-serif' font-size="14.31" fill="#000" text-anchor="middle" textLength="35.31" lengthAdjust="spacingAndGlyphs">4000</text>
<text x="1185.50" y="1137.30" font-family='"Liberation Sans",sans-serif' font-size="14.31" fill="#000" text-anchor="middle" textLength="35.31" lengthAdjust="spacingAndGlyphs">6000</text>
<text x="1379.50" y="1137.30" font-family='"Liberation Sans",sans-serif' font-size="14.31" fill="#000" text-anchor="middle" textLength="35.31" lengthAdjust="spacingAndGlyphs">8000</text>
<text x="1574.50" y="1137.30" font-family='"Liberation Sans",sans-serif' font-size="14.31" fill="#000" text-anchor="middle" textLength="44.14" lengthAdjust="spacingAndGlyphs">10000</text>
<text x="485.27" y="1122.10" font-family='"Liberation Sans",sans-serif' font-size="14.31" fill="#000" textLength="8.83" lengthAdjust="spacingAndGlyphs">0</text>
<text x="467.62" y="977.10" font-family='"Liberation Sans",sans-serif' font-size="14.31" fill="#000" textLength="26.48" lengthAdjust="spacingAndGlyphs">100</text>
<text x="467.62" y="832.10" font-family='"Liberation Sans",sans-serif' font-size="14.31" fill="#000" textLength="26.48" lengthAdjust="spacingAndGlyphs">200</text>
<text x="467.62" y="688.10" font-family='"Liberation Sans",sans-serif' font-size="14.31" fill="#000" textLength="26.48" lengthAdjust="spacingAndGlyphs">300</text>
<text x="467.62" y="543.10" font-family='"Liberation Sans",sans-serif' font-size="14.31" fill="#000" textLength="26.48" lengthAdjust="spacingAndGlyphs">400</text>
<text x="467.62" y="399.10" font-family='"Liberation Sans",sans-serif' font-size="14.31" fill="#000" textLength="26.48" lengthAdjust="spacingAndGlyphs">500</text>
<text x="467.62" y="254.10" font-family='"Liberation Sans",sans-serif' font-size="14.31" fill="#000" textLength="26.48" lengthAdjust="spacingAndGlyphs">600</text>
<text x="1669.30" y="1122.60" font-family='"Liberation Sans",sans-serif' font-size="14.31" fill="#000" textLength="8.83" lengthAdjust="spacingAndGlyphs">0</text>
<text x="1669.30" y="936.60" font-family='"Liberation Sans",sans-serif' font-size="14.31" fill="#000" textLength="26.48" lengthAdjust="spacingAndGlyphs">100</text>
<text x="1669.30" y="749.60" font-family='"Liberation Sans",sans-serif' font-size="14.31" fill="#000" textLength="26.48" lengthAdjust="spacingAndGlyphs">200</text>
<text x="1669.30" y="563.60" font-family='"Liberation Sans",sans-serif' font-size="14.31" fill="#000" textLength="26.48" lengthAdjust="spacingAndGlyphs">300</text>
<text x="1669.30" y="377.60" font-family='"Liberation Sans",sans-serif' font-size="14.31" fill="#000" textLength="26.48" lengthAdjust="spacingAndGlyphs">400</text>
<g><line x1="603.50" y1="1117.0" x2="603.50" y2="1121.9" stroke="#000" stroke-width="1.11"/><line x1="797.50" y1="1117.0" x2="797.50" y2="1121.9" stroke="#000" stroke-width="1.11"/><line x1="991.50" y1="1117.0" x2="991.50" y2="1121.9" stroke="#000" stroke-width="1.11"/><line x1="1185.50" y1="1117.0" x2="1185.50" y2="1121.9" stroke="#000" stroke-width="1.11"/><line x1="1379.50" y1="1117.0" x2="1379.50" y2="1121.9" stroke="#000" stroke-width="1.11"/><line x1="1574.50" y1="1117.0" x2="1574.50" y2="1121.9" stroke="#000" stroke-width="1.11"/><line x1="500.6" y1="1117.50" x2="505.5" y2="1117.50" stroke="#000" stroke-width="1.11"/><line x1="500.6" y1="972.50" x2="505.5" y2="972.50" stroke="#000" stroke-width="1.11"/><line x1="500.6" y1="827.50" x2="505.5" y2="827.50" stroke="#000" stroke-width="1.11"/><line x1="500.6" y1="683.50" x2="505.5" y2="683.50" stroke="#000" stroke-width="1.11"/><line x1="500.6" y1="538.50" x2="505.5" y2="538.50" stroke="#000" stroke-width="1.11"/><line x1="500.6" y1="394.50" x2="505.5" y2="394.50" stroke="#000" stroke-width="1.11"/><line x1="500.6" y1="249.50" x2="505.5" y2="249.50" stroke="#000" stroke-width="1.11"/><line x1="1659.5" y1="1117.50" x2="1664.4" y2="1117.50" stroke="#000" stroke-width="1.11"/><line x1="1659.5" y1="931.50" x2="1664.4" y2="931.50" stroke="#000" stroke-width="1.11"/><line x1="1659.5" y1="744.50" x2="1664.4" y2="744.50" stroke="#000" stroke-width="1.11"/><line x1="1659.5" y1="558.50" x2="1664.4" y2="558.50" stroke="#000" stroke-width="1.11"/><line x1="1659.5" y1="372.50" x2="1664.4" y2="372.50" stroke="#000" stroke-width="1.11"/></g>
<text x="1082.50" y="213.00" font-family='"Liberation Sans",sans-serif' font-size="17.17" fill="#000" text-anchor="middle" textLength="199.23" lengthAdjust="spacingAndGlyphs">Intensity measured BCT</text>
<text x="1082.50" y="1157.00" font-family='"Liberation Sans",sans-serif' font-size="14.31" fill="#000" text-anchor="middle" textLength="142.95" lengthAdjust="spacingAndGlyphs">Injection time(msec)</text>
<text x="460.00" y="669.25" font-family='"Liberation Sans",sans-serif' font-size="14.31" fill="#000" text-anchor="middle" textLength="192.56" lengthAdjust="spacingAndGlyphs" transform="rotate(-90 460.00 669.25)">Intensity (chargues E1e-08)</text>
<text x="1712.30" y="670.50" font-family='"Liberation Sans",sans-serif' font-size="14.31" fill="#008000" text-anchor="middle" textLength="123.03" lengthAdjust="spacingAndGlyphs" transform="rotate(-90 1712.30 670.50)">Momentum (GeV)</text>
<rect x="512.5" y="228.5" width="179" height="45.5" rx="2.8" fill="#ffffff" fill-opacity="0.8" stroke="#cccccc" stroke-width="1"/>
<line x1="515.8" y1="240" x2="546" y2="240" stroke="#3a62d8" stroke-width="2.1"/>
<line x1="515.8" y1="261" x2="546" y2="261" stroke="#ffa500" stroke-width="2.1"/>
<text x="555.44" y="244.80" font-family='"Liberation Sans",sans-serif' font-size="14.31" fill="#000" textLength="129.03" lengthAdjust="spacingAndGlyphs">BCT Total Intensity</text>
<text x="555.44" y="265.80" font-family='"Liberation Sans",sans-serif' font-size="14.31" fill="#000" textLength="69.84" lengthAdjust="spacingAndGlyphs">Reference</text>
<rect x="1523.5" y="228.5" width="129" height="25" rx="2.8" fill="#ffffff" fill-opacity="0.8" stroke="#cccccc" stroke-width="1"/>
<line x1="1527.9" y1="239.7" x2="1557.8" y2="239.7" stroke="#008000" stroke-width="2.1"/>
<text x="1567.24" y="245.20" font-family='"Liberation Sans",sans-serif' font-size="14.31" fill="#000" textLength="79.05" lengthAdjust="spacingAndGlyphs">Momentum</text>
<g><path d="M444.3 1202.8 L453.9 1194.6 L463.6 1202.8" fill="none" stroke="#000" stroke-width="1.8" stroke-linecap="round" stroke-linejoin="miter"/><path d="M458.4 1194 H461.2 V1199.2 L458.4 1196.8 Z" fill="#000"/><path d="M446.8 1202.3 L453.9 1196.4 L461.1 1202.3 V1209.9 H456.1 V1205 H451.8 V1209.9 H446.8 Z" fill="#000"/><path d="M488.2 1193.3 L480.4 1200.3 L488.2 1207.3 M481 1200.3 H494.4" fill="none" stroke="#666666" stroke-width="4.2" stroke-linecap="round" stroke-linejoin="round"/><path d="M518.8 1193.3 L526.6 1200.3 L518.8 1207.3 M526 1200.3 H512.6" fill="none" stroke="#666666" stroke-width="4.2" stroke-linecap="round" stroke-linejoin="round"/><line x1="540.5" y1="1191" x2="540.5" y2="1210" stroke="#d2d2d2" stroke-width="1"/><line x1="679.5" y1="1191" x2="679.5" y2="1210" stroke="#d2d2d2" stroke-width="1"/><path d="M559.8 1192 V1208.6 M551.5 1200.3 H568.1" stroke="#000" stroke-width="2.4" fill="none"/><path d="M559.8 1188.8 L564.1 1193.2 H555.5 Z M559.8 1211.9 L564.1 1207.4 H555.5 Z M548.7 1200.3 L553.1 1196 V1204.6 Z M571.2 1200.3 L566.8 1196 V1204.6 Z" fill="#000"/><circle cx="591.2" cy="1198.8" r="6.8" fill="none" stroke="#000" stroke-width="3.1"/><path d="M597 1204 L602.3 1209.4" stroke="#000" stroke-width="3.4" stroke-linecap="round"/><path d="M616.3 1194.8 H635.7 M616.3 1201.3 H635.7 M616.3 1207.9 H635.7" stroke="#000" stroke-width="1.6"/><rect x="620" y="1192.6" width="4.4" height="4.4" fill="#000"/><rect x="628.1" y="1199.1" width="4.4" height="4.4" fill="#000"/><rect x="621.5" y="1205.7" width="4.4" height="4.4" fill="#000"/><path d="M647.6 1191.1 V1209.5 H671" fill="none" stroke="#000" stroke-width="1.6"/><path d="M650.6 1205.4 L656.8 1199.4 L659.7 1203.1 L667.2 1195.4" fill="none" stroke="#000" stroke-width="3.4" stroke-linejoin="miter"/><path d="M664 1192.2 H670.6 V1198.8 Z" fill="#000"/><path d="M690.8 1192.3 H704.3 L707.4 1195.4 V1208.7 H690.8 Z" fill="none" stroke="#000" stroke-width="2.4" stroke-linejoin="round"/><path d="M692.6 1192.3 H702.7 V1197.9 H692.6 Z" fill="#000"/><rect x="697.3" y="1193.2" width="2.8" height="3.8" fill="#fbfbfb"/><path d="M692.6 1202.2 H705.5 V1208.7 H692.6 Z" fill="#000"/><rect x="694" y="1203.9" width="10.2" height="4.6" fill="#fbfbfb"/></g>
<rect x="6.5" y="1268.5" width="1746" height="77" rx="2" fill="#ececec" stroke="#d3d3d3" stroke-width="1"/>
<text x="20.22" y="1293.30" font-family='"Liberation Sans",sans-serif' font-size="12.36" fill="#000" textLength="72.91" lengthAdjust="spacingAndGlyphs">Log Console</text>
<line x1="17" y1="1299.5" x2="1740" y2="1299.5" stroke="#a9a9a9" stroke-width="1"/>
<rect x="22.5" y="1306.5" width="1683" height="22" rx="2" fill="#ffffff" stroke="#a8a8a8" stroke-width="1"/>
<text x="24.66" y="1321.70" font-family='"Liberation Mono",monospace' font-size="12.36" fill="#000" font-style="italic" textLength="1529.50" lengthAdjust="spacingAndGlyphs">2024-10-09 16:36:42,153 - matplotlib.legend - WARNING - No artists with labels found to put in legend.  Note that artists whose label start with an underscore are ignored when legend() is called with no argument.</text>
<rect x="1712.5" y="1306.5" width="23" height="22" rx="2.5" fill="url(#btn)" stroke="#b0b0b0" stroke-width="1"/>
<path d="M1720.5 1320.5 L1724 1316.6 L1727.5 1320.5 Z" fill="#5a5a5a"/>
<rect x="1753" y="1356" width="1" height="1" fill="#b9b9b9"/><rect x="1750" y="1359" width="1" height="1" fill="#b9b9b9"/><rect x="1753" y="1359" width="1" height="1" fill="#b9b9b9"/><rect x="1747" y="1362" width="1" height="1" fill="#b9b9b9"/><rect x="1750" y="1362" width="1" height="1" fill="#b9b9b9"/><rect x="1753" y="1362" width="1" height="1" fill="#b9b9b9"/><rect x="1744" y="1365" width="1" height="1" fill="#b9b9b9"/><rect x="1747" y="1365" width="1" height="1" fill="#b9b9b9"/><rect x="1750" y="1365" width="1" height="1" fill="#b9b9b9"/><rect x="1753" y="1365" width="1" height="1" fill="#b9b9b9"/>
<path d="M0.5 1373 V3 Q0.5 0.5 3 0.5 H1755 Q1757.5 0.5 1757.5 3 V1373" fill="none" stroke="#47433f" stroke-width="1"/>
<line x1="0" y1="1372.5" x2="1758" y2="1372.5" stroke="#47433f" stroke-width="1"/>
<line x1="2.5" y1="19" x2="2.5" y2="1371" stroke="#f6f5f4" stroke-width="3"/>
<line x1="1755" y1="19" x2="1755" y2="1371" stroke="#f6f5f4" stroke-width="3"/>
<line x1="0" y1="1369.5" x2="1758" y2="1369.5" stroke="#f6f5f4" stroke-width="3"/>
</svg>
</body></html>
